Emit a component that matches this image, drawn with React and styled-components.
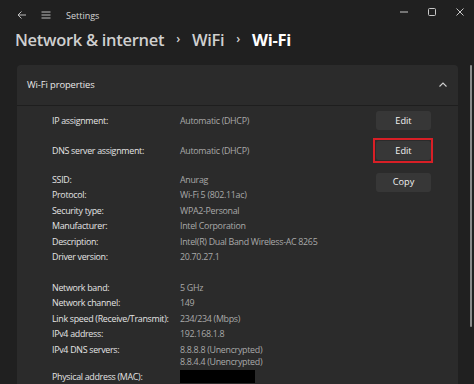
import React from "react";
import styled, { createGlobalStyle } from "styled-components";

const Global = createGlobalStyle`
  html, body { margin: 0; padding: 0; background: #202020; }
  body { font-family: "Open Sans", "Noto Sans", sans-serif; color: #e6e6e6; }
  #root { width: 474px; height: 384px; overflow: hidden; }
`;

const Page = styled.div`
  width: 474px;
  height: 384px;
  background: #202020;
  display: flex;
  flex-direction: column;
  overflow: hidden;
`;

const TitleBar = styled.div`
  height: 26px;
  display: flex;
  align-items: center;
  padding: 2px 0 0 10px;
`;

const IconBtn = styled.div`
  width: 24px;
  height: 20px;
  display: flex;
  align-items: center;
  justify-content: center;
  color: #bdbdbd;
`;

const AppName = styled.span`
  font-size: 9px;
  color: #d6d6d6;
  margin-left: 8px;
`;

const Spacer = styled.div`
  flex: 1;
`;

const WinControls = styled.div`
  display: flex;
  align-self: flex-start;
  margin-top: 3px;
`;

const WinBtn = styled.div`
  width: 28px;
  height: 14px;
  display: flex;
  align-items: center;
  justify-content: center;
  color: #c8c8c8;
`;

const Breadcrumb = styled.div`
  height: 23px;
  display: flex;
  align-items: center;
  padding-left: 15px;
  font-size: 16.5px;
  letter-spacing: -0.3px;
`;

const Crumb = styled.span`
  color: ${(p) => (p.$current ? "#ffffff" : "#cfcfcf")};
  font-weight: ${(p) => (p.$current ? 700 : 600)};
`;

const Sep = styled.span`
  font-size: 12px;
  color: #cfcfcf;
  margin: 0 12px;
  font-weight: 600;
  position: relative;
  top: -1px;
`;

const Content = styled.div`
  flex: 1;
  display: flex;
  margin-top: 14px;
  min-height: 0;
`;

const Card = styled.div`
  margin-left: 17px;
  width: 441px;
  background: #2b2b2b;
  border-radius: 4px 4px 0 0;
  display: flex;
  flex-direction: column;
`;

const CardHeader = styled.div`
  height: 40px;
  display: flex;
  align-items: center;
  justify-content: space-between;
  padding: 0 10px 0 10px;
  border-bottom: 1px solid #1e1e1e;
  font-size: 9.4px;
  letter-spacing: -0.1px;
  color: #e8e8e8;
`;

const Body = styled.div`
  padding: 0 26px 0 35px;
  font-size: 8.9px;
  letter-spacing: -0.3px;
`;

const ActionRow = styled.div`
  display: grid;
  grid-template-columns: 128px 1fr 56px;
  align-items: center;
  height: 30px;
`;

const Label = styled.div`
  grid-column: 1;
  color: #e4e4e4;
  white-space: nowrap;
`;

const Value = styled.div`
  grid-column: 2;
  color: #a9a9a9;
  white-space: nowrap;
`;

const Button = styled.div`
  width: 55px;
  height: 19px;
  background: #373737;
  border-radius: 3px;
  color: #f2f2f2;
  font-size: 9.2px;
  letter-spacing: 0;
  display: flex;
  align-items: center;
  justify-content: center;
  box-sizing: border-box;
  position: relative;
  ${(p) =>
    p.$highlight &&
    `
    &::after {
      content: "";
      position: absolute;
      inset: -3px -2px -3px -3px;
      border: 2px solid #d81f26;
    }
  `}
`;

const InfoGrid = styled.div`
  display: grid;
  grid-template-columns: 128px 1fr 56px;
  line-height: 15.5px;
  margin-top: 6px;
`;

const CopyCell = styled.div`
  grid-column: 3;
  grid-row: 1 / span 2;
  align-self: start;
  padding-top: 1px;
`;

const Gap = styled.div`
  grid-column: 1 / span 3;
  height: 15px;
`;

const Multi = styled.div`
  grid-column: 2;
  color: #a9a9a9;
  line-height: 12px;
  padding-top: 2px;
  padding-bottom: 1px;
  white-space: nowrap;
`;

const Redacted = styled.div`
  grid-column: 2;
  width: 75px;
  height: 13px;
  background: #000;
  margin-top: 1px;
`;

const ScrollTrack = styled.div`
  flex: 1;
  display: flex;
  justify-content: flex-end;
  padding-right: 2px;
`;

const Thumb = styled.div`
  width: 2px;
  height: 262px;
  background: #8c8c8c;
  border-radius: 1px;
`;

const Back = () => (
  <svg width="12" height="12" viewBox="0 0 12 12" fill="none" stroke="currentColor" strokeWidth="1">
    <path d="M10 6H2M5.5 2.5L2 6l3.5 3.5" />
  </svg>
);
const Menu = () => (
  <svg width="12" height="12" viewBox="0 0 12 12" fill="none" stroke="currentColor" strokeWidth="1">
    <path d="M1.5 3h9M1.5 6h9M1.5 9h9" />
  </svg>
);

const info = [
  ["SSID:", "Anurag"],
  ["Protocol:", "Wi-Fi 5 (802.11ac)"],
  ["Security type:", "WPA2-Personal"],
  ["Manufacturer:", "Intel Corporation"],
  ["Description:", "Intel(R) Dual Band Wireless-AC 8265"],
  ["Driver version:", "20.70.27.1"],
];
const info2 = [
  ["Network band:", "5 GHz"],
  ["Network channel:", "149"],
  ["Link speed (Receive/Transmit):", "234/234 (Mbps)"],
  ["IPv4 address:", "192.168.1.8"],
];

export default function App() {
  return (
    <Page>
      <Global />
      <TitleBar>
        <IconBtn><Back /></IconBtn>
        <IconBtn><Menu /></IconBtn>
        <AppName>Settings</AppName>
        <Spacer />
        <WinControls>
          <WinBtn>
            <svg width="10" height="10" viewBox="0 0 10 10" stroke="currentColor" strokeWidth="1"><path d="M1 5h8" /></svg>
          </WinBtn>
          <WinBtn>
            <svg width="10" height="10" viewBox="0 0 10 10" fill="none" stroke="currentColor" strokeWidth="1"><rect x="1.5" y="1.5" width="7" height="7" rx="1" /></svg>
          </WinBtn>
          <WinBtn>
            <svg width="10" height="10" viewBox="0 0 10 10" stroke="currentColor" strokeWidth="1"><path d="M1.5 1.5l7 7M8.5 1.5l-7 7" /></svg>
          </WinBtn>
        </WinControls>
      </TitleBar>
      <Breadcrumb>
        <Crumb>Network &amp; internet</Crumb>
        <Sep>›</Sep>
        <Crumb>WiFi</Crumb>
        <Sep>›</Sep>
        <Crumb $current>Wi-Fi</Crumb>
      </Breadcrumb>
      <Content>
        <Card>
          <CardHeader>
            <span>Wi-Fi properties</span>
            <svg width="10" height="10" viewBox="0 0 10 10" fill="none" stroke="#d0d0d0" strokeWidth="1.1">
              <path d="M1.5 6.5L5 3l3.5 3.5" />
            </svg>
          </CardHeader>
          <Body>
            <ActionRow>
              <Label>IP assignment:</Label>
              <Value>Automatic (DHCP)</Value>
              <Button>Edit</Button>
            </ActionRow>
            <ActionRow>
              <Label>DNS server assignment:</Label>
              <Value>Automatic (DHCP)</Value>
              <Button $highlight>Edit</Button>
            </ActionRow>
            <InfoGrid>
              <CopyCell><Button>Copy</Button></CopyCell>
              {info.map(([l, v]) => (
                <React.Fragment key={l}>
                  <Label>{l}</Label>
                  <Value>{v}</Value>
                </React.Fragment>
              ))}
              <Gap />
              {info2.map(([l, v]) => (
                <React.Fragment key={l}>
                  <Label>{l}</Label>
                  <Value>{v}</Value>
                </React.Fragment>
              ))}
              <Label>IPv4 DNS servers:</Label>
              <Multi>
                <div>8.8.8.8 (Unencrypted)</div>
                <div>8.8.4.4 (Unencrypted)</div>
              </Multi>
              <Label>Physical address (MAC):</Label>
              <Redacted />
            </InfoGrid>
          </Body>
        </Card>
        <ScrollTrack>
          <Thumb />
        </ScrollTrack>
      </Content>
    </Page>
  );
}
